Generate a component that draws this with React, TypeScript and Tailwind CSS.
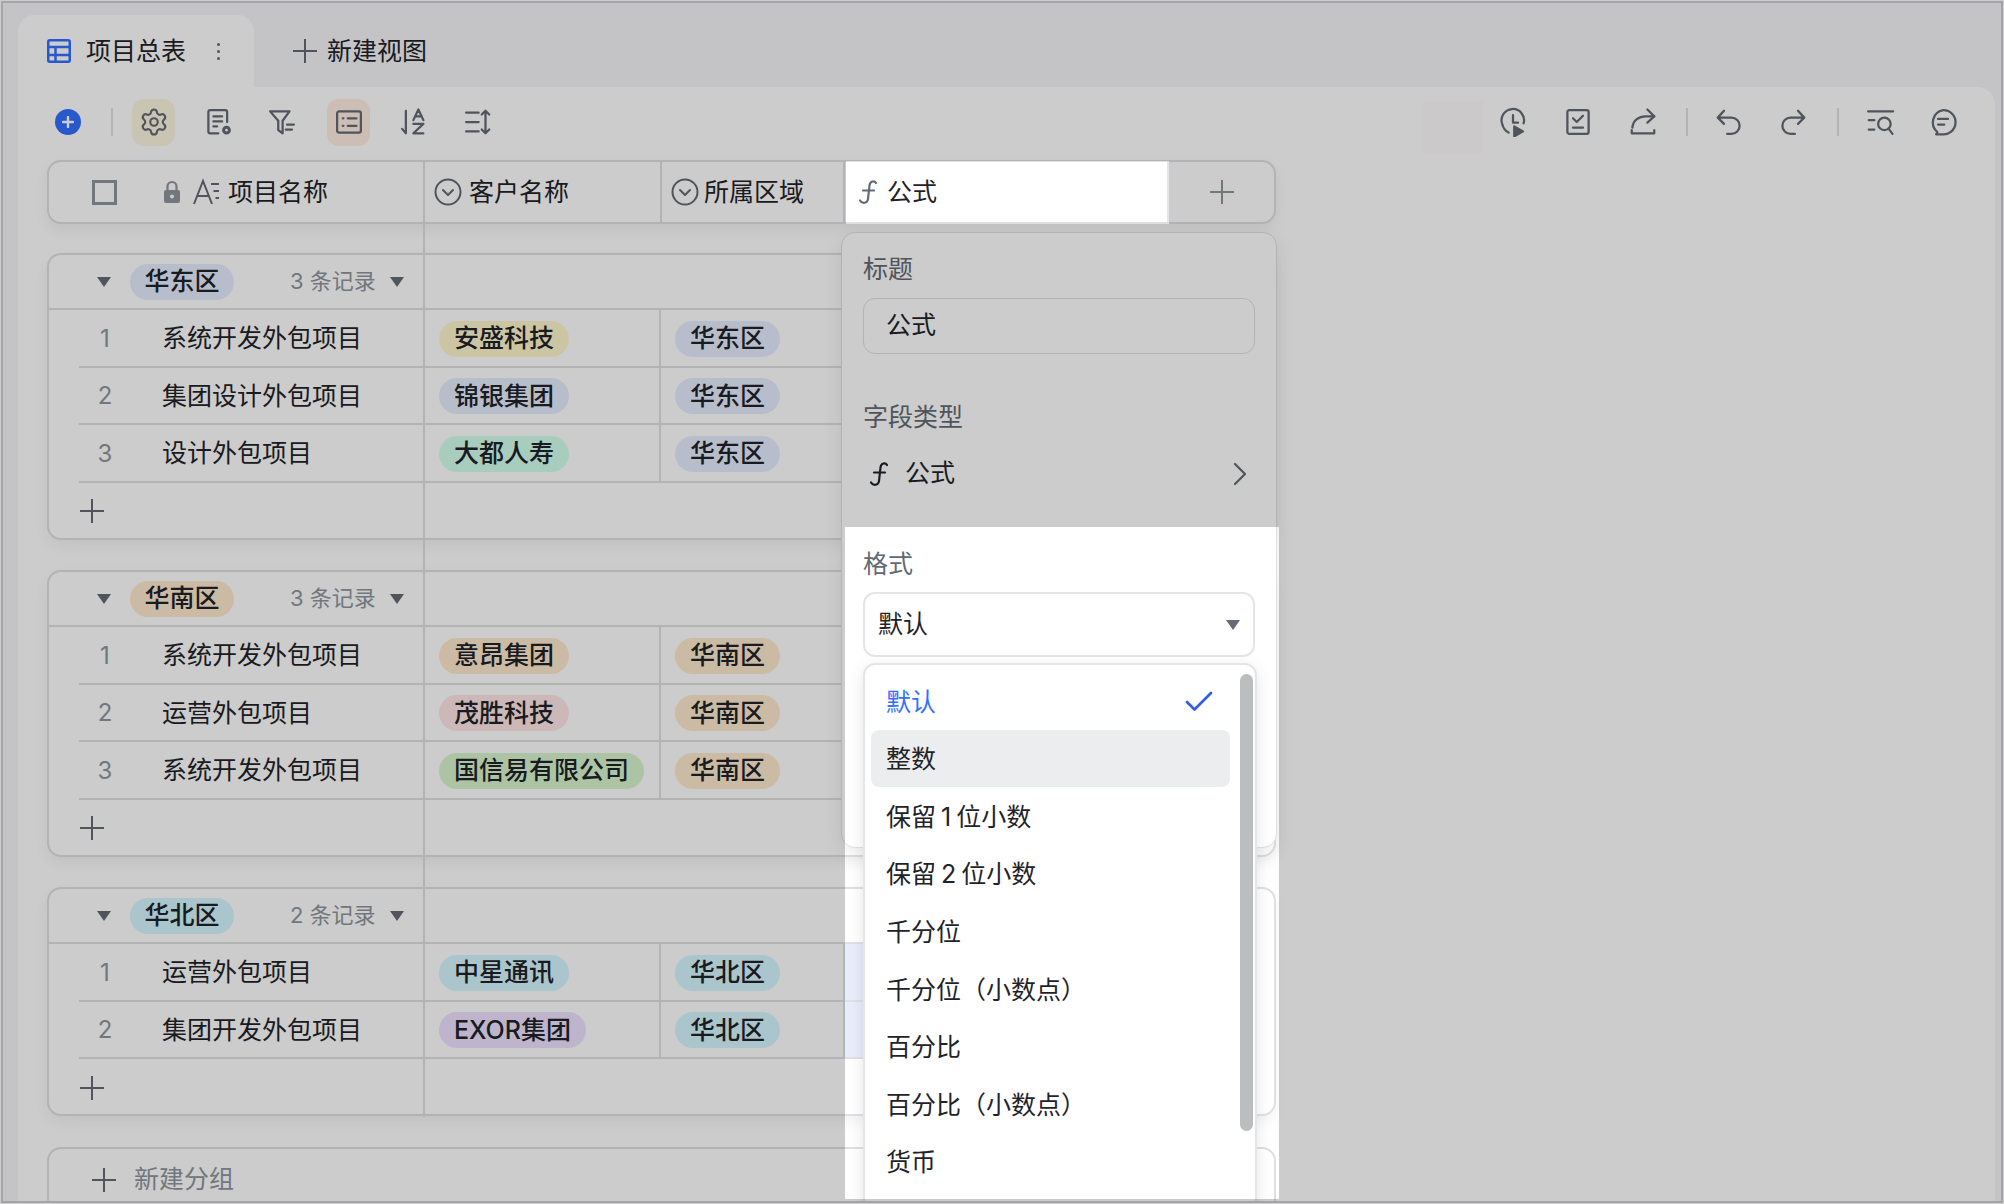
import { ChevronRight, Check, Settings } from 'lucide-react'

const font = 'font-["Inter","Noto_Sans_CJK_SC",sans-serif]'

interface Row {
  name: string
  customer: string
  customerColor: string
}

interface Group {
  region: string
  regionColor: string
  count: number
  rows: Row[]
}

const blue = 'bg-[#e6edff]'
const yellow = 'bg-[#fff7ce]'
const green = 'bg-[#d2ffed]'
const orange = 'bg-[#feeace]'
const pink = 'bg-[#ffe7e7]'
const leaf = 'bg-[#d7f5ce]'
const sky = 'bg-[#d5f7ff]'
const purple = 'bg-[#eee3ff]'

const groups: Group[] = [
  {
    region: '华东区',
    regionColor: blue,
    count: 3,
    rows: [
      { name: '系统开发外包项目', customer: '安盛科技', customerColor: yellow },
      { name: '集团设计外包项目', customer: '锦银集团', customerColor: blue },
      { name: '设计外包项目', customer: '大都人寿', customerColor: green },
    ],
  },
  {
    region: '华南区',
    regionColor: orange,
    count: 3,
    rows: [
      { name: '系统开发外包项目', customer: '意昂集团', customerColor: orange },
      { name: '运营外包项目', customer: '茂胜科技', customerColor: pink },
      { name: '系统开发外包项目', customer: '国信易有限公司', customerColor: leaf },
    ],
  },
  {
    region: '华北区',
    regionColor: sky,
    count: 2,
    rows: [
      { name: '运营外包项目', customer: '中星通讯', customerColor: sky },
      { name: '集团开发外包项目', customer: 'EXOR集团', customerColor: purple },
    ],
  },
]

const formats = ['整数', '保留 1 位小数', '保留 2 位小数', '千分位', '千分位（小数点）', '百分比', '百分比（小数点）', '货币']

function Icon({ children }: { children: React.ReactNode }) {
  return (
    <svg width="30" height="30" viewBox="0 0 24 24" fill="none" stroke="#646a73" strokeWidth="1.8" strokeLinecap="round" strokeLinejoin="round" className="-mx-px shrink-0">
      {children}
    </svg>
  )
}

function PlusIcon({ color = '#646a73' }: { color?: string }) {
  return (
    <svg width="24" height="24" viewBox="0 0 24 24" fill="none" stroke={color} strokeWidth="2" className="shrink-0">
      <path d="M12 0v24M0 12h24" />
    </svg>
  )
}

function FormulaIcon({ color = '#646a73' }: { color?: string }) {
  return (
    <svg width="24" height="28" viewBox="0 0 24 28" fill="none" stroke={color} strokeWidth="2.2" strokeLinecap="round" className="shrink-0">
      <path d="M21 5C19.500 2.500 15 2.800 14.500 7.500L13 21c-.5 4.500-6 5-8 1.500" />
      <path d="M8 12.500h11" />
    </svg>
  )
}

function CircleChevron() {
  return (
    <svg width="28" height="28" viewBox="0 0 28 28" fill="none" stroke="#646a73" strokeWidth="2" strokeLinecap="round" strokeLinejoin="round" className="shrink-0">
      <circle cx="14" cy="14" r="12.500" />
      <path d="M9 12l5 5 5-5" />
    </svg>
  )
}

function Triangle({ className = '' }: { className?: string }) {
  return <div className={`h-0 w-0 border-x-[7px] border-t-[10px] border-x-transparent border-t-[#646a73] ${className}`} />
}

function Pill({ color, children }: { color: string; children: React.ReactNode }) {
  return <span className={`inline-flex h-[36px] items-center rounded-full px-[15px] text-[25px] font-medium text-[#1f2329] ${color}`}>{children}</span>
}

function GroupBlock({ group }: { group: Group }) {
  return (
    <div className="w-[1229px] rounded-[14px] border-2 border-[#dee0e3] bg-white shadow-[0_6px_14px_rgba(0,0,0,0.05)]">
      <div className="flex h-[55px] w-[1122px] items-center border-b-2 border-[#dee0e3]">
        <div className="flex w-[374px] items-center">
          <Triangle className="ml-[48px]" />
          <div className={`ml-[19px] flex h-[36px] w-[104px] items-center justify-center rounded-full text-[25px] font-medium text-[#1f2329] ${group.regionColor}`}>{group.region}</div>
          <span className="ml-[56px] text-[22px] text-[#8f959e]">{group.count} 条记录</span>
          <Triangle className="ml-[14px]" />
        </div>
      </div>
      {group.rows.map((row, i) => (
        <div key={row.name + row.customer} className="ml-[30px] flex h-[57.5px] w-[1090px] items-center border-b-2 border-[#dee0e3]">
          <div className="flex h-full w-[344px] items-center pt-[2px]">
            <span className="w-[52px] text-center text-[24px] text-[#8f959e]">{i + 1}</span>
            <span className="ml-[31px] text-[25px] text-[#1f2329]">{row.name}</span>
          </div>
          <div className="flex h-full w-[238px] items-center border-r-2 border-[#dee0e3] pl-[16px] pt-[2px]">
            <Pill color={row.customerColor}>{row.customer}</Pill>
          </div>
          <div className="flex h-full w-[182px] items-center pl-[14px] pt-[2px]">
            <Pill color={group.regionColor}>{group.region}</Pill>
          </div>
          <div className="h-full flex-1 border-l-2 border-[#dee0e3] bg-[#e8edfb]" />
        </div>
      ))}
      <div className="flex h-[55px] items-center pl-[31px] pt-[2px]">
        <PlusIcon />
      </div>
    </div>
  )
}

export default function App() {
  return (
    <div className={`relative h-[1204px] w-[2004px] overflow-hidden bg-white p-px ${font}`}>
      <div className="relative h-[1202px] w-[2002px] overflow-hidden border-2 border-[#cecfd2] bg-[#f5f6f9]">
        {/* tabs */}
        <div className="flex h-[84px] items-end pl-[15px]">
          <div className="flex h-[72px] w-[236px] items-center rounded-t-[16px] bg-white pl-[29px]">
            <svg width="24" height="24" viewBox="0 0 24 24" fill="none" stroke="#3370ff" strokeWidth="2.500">
              <rect x="1.250" y="1.250" width="21.500" height="21.500" rx="1.500" />
              <path d="M1 8h22M1 16h22M8.500 8v15" />
            </svg>
            <span className="ml-[15px] pt-[1px] text-[25px] text-[#1f2329]">项目总表</span>
            <div className="ml-[31px] flex flex-col gap-[4px]">
              <div className="h-[3px] w-[3px] rounded-full bg-[#646a73]" />
              <div className="h-[3px] w-[3px] rounded-full bg-[#646a73]" />
              <div className="h-[3px] w-[3px] rounded-full bg-[#646a73]" />
            </div>
          </div>
          <div className="flex h-[72px] items-center pl-[39px]">
            <PlusIcon />
            <span className="ml-[10px] pt-[1px] text-[25px] text-[#1f2329]">新建视图</span>
          </div>
        </div>

        <div className="ml-[15px] h-[1120px] w-[1977px] rounded-tr-[18px] bg-white">
          {/* toolbar */}
          <div className="flex h-[70px] items-center pl-[37px]">
            <div className="flex h-[26px] w-[26px] items-center justify-center rounded-full bg-[#3370ff]">
              <svg width="12" height="12" viewBox="0 0 12 12" stroke="white" strokeWidth="2.400" strokeLinecap="round">
                <path d="M6 1v10M1 6h10" />
              </svg>
            </div>
            <div className="ml-[30px] h-[28px] w-[2px] bg-[#dee0e3]" />
            <div className="ml-[19px] flex h-[47px] w-[43px] items-center justify-center rounded-[12px] bg-[#fdf6df]">
              <Settings size={30} strokeWidth={1.7} color="#646a73" />
            </div>
            <div className="ml-[30px]">
              <Icon>
                <path d="M11.500 21H5a1.500 1.500 0 01-1.500-1.500V4A1.500 1.500 0 015 2.500h12A1.500 1.500 0 0118.500 4v8" />
                <path d="M7.500 7.500h7M7.500 11.500h7M7.500 15.500h3" />
                <circle cx="18" cy="18.500" r="2.300" strokeWidth="2.400" />
              </Icon>
            </div>
            <div className="ml-[35px]">
              <Icon>
                <path d="M2.500 3.500h15.500l-5.500 7.500v10l-3.500-2.500V11z" />
                <path d="M16 14h5.500M15 18h5" />
              </Icon>
            </div>
            <div className="ml-[31px] flex h-[47px] w-[43px] items-center justify-center rounded-[12px] bg-[#ffeee3]">
              <Icon>
                <rect x="2.500" y="3.500" width="19" height="17" rx="1.500" />
                <path d="M7 9h.5M11 9h7M7 15h.5M11 15h7" />
              </Icon>
            </div>
            <div className="ml-[30px]">
              <Icon>
                <path d="M5.500 3v18l-3-3.500" />
                <path d="M11.500 10.500L15.500 2l4 8.500M12.800 7.500h5.400M11.500 13.500h8l-8 7.500h8" />
              </Icon>
            </div>
            <div className="ml-[36px]">
              <Icon>
                <path d="M2.500 4.500h10M2.500 12h10M2.500 19.500h10" />
                <path d="M18 3v18M15 6l3-3 3 3M15 18l3 3 3-3" />
              </Icon>
            </div>

            <div className="ml-[931px] mt-[10px] h-[52px] w-[60px] bg-[#fffcfd]" />
            <div className="ml-[16px]">
              <Icon>
                <path d="M20.500 13A9 9 0 103.500 14c.6 2.500 2.300 5 5 6.500" />
                <path d="M12 6.500v6h4" />
                <path d="M13 15.500l7 4-7 4z" fill="#646a73" />
              </Icon>
            </div>
            <div className="ml-[37px]">
              <Icon>
                <rect x="3.500" y="2.500" width="17" height="19" rx="1.500" />
                <path d="M8 9l3 3 5-5M8 16.500h8" />
              </Icon>
            </div>
            <div className="ml-[37px]">
              <Icon>
                <path d="M3.500 16.500C4 10.500 9 7.500 14 7.500h7" />
                <path d="M15.500 2l5.500 5.500-5.500 5M3 18.500v2.500h18v-2.500" />
              </Icon>
            </div>
            <div className="ml-[29px] h-[28px] w-[2px] bg-[#dee0e3]" />
            <div className="ml-[27px]">
              <Icon>
                <path d="M8 3L3 8.500l5 5M3.500 8.500H14a6.500 6.500 0 010 13h-3.500" />
              </Icon>
            </div>
            <div className="ml-[36px]">
              <Icon>
                <path d="M16 3l5 5.500-5 5M20.500 8.500H10a6.500 6.500 0 000 13h3.500" />
              </Icon>
            </div>
            <div className="ml-[30px] h-[28px] w-[2px] bg-[#dee0e3]" />
            <div className="ml-[27px]">
              <Icon>
                <path d="M2.500 3.500h20M3 10.500h4.500M3 18h4.500" />
                <circle cx="15.500" cy="13.500" r="5" />
                <path d="M19 17.500l3 4" />
              </Icon>
            </div>
            <div className="ml-[35px]">
              <Icon>
                <path d="M12 2.500a9.700 9.700 0 11-1 19.300H6.500l1-1.800A10 10 0 0112 2.500z" />
                <path d="M8 9.500h8M8 14h5" />
              </Icon>
            </div>
          </div>

          {/* table */}
          <div className="relative ml-[29px] mt-[3px]">
            <div className="absolute left-[376px] top-0 h-[957px] w-[2px] bg-[#dee0e3]" />

            <div className="flex h-[64px] w-[1229px] items-stretch overflow-hidden rounded-[14px] border-2 border-[#dee0e3] bg-white shadow-[0_6px_14px_rgba(0,0,0,0.06)]">
              <div className="flex w-[374px] items-center">
                <div className="ml-[43px] h-[25px] w-[25px] border-[3px] border-[#8f959e]" />
                <svg width="18" height="24" viewBox="0 0 18 24" className="ml-[46px] shrink-0">
                  <path d="M4.500 11V6.500a4.500 4.500 0 019 0V11" fill="none" stroke="#8f959e" strokeWidth="2.200" />
                  <rect x="1" y="10" width="16" height="13" rx="2" fill="#8f959e" />
                  <circle cx="9" cy="16.500" r="2" fill="white" />
                </svg>
                <svg width="28" height="28" viewBox="0 0 28 28" fill="none" stroke="#646a73" strokeWidth="2" className="ml-[12px] shrink-0">
                  <path d="M1 26L10 3l9 23M4.500 18h11M18 6h8M20.500 13h5.500M22.500 20h3.500" />
                </svg>
                <span className="ml-[7px] pt-[2px] text-[25px] text-[#1f2329]">项目名称</span>
              </div>
              <div className="flex w-[237px] items-center border-l-2 border-[#dee0e3] pl-[9px]">
                <CircleChevron />
                <span className="ml-[7px] pt-[2px] text-[25px] text-[#1f2329]">客户名称</span>
              </div>
              <div className="flex w-[183px] items-center border-l-2 border-[#dee0e3] pl-[9px]">
                <CircleChevron />
                <span className="ml-[5px] pt-[2px] text-[25px] text-[#1f2329]">所属区域</span>
              </div>
              <div className="flex w-[326px] items-center border-x-2 border-l-[#dee0e3] border-r-[#e4e5e8] pl-[10px]">
                <FormulaIcon />
                <span className="ml-[8px] pt-[2px] text-[25px] text-[#1f2329]">公式</span>
              </div>
              <div className="flex flex-1 items-center justify-center">
                <PlusIcon color="#8f959e" />
              </div>
            </div>

            <div className="mt-[29px] flex flex-col gap-[30.5px]">
              {groups.map((g) => (
                <GroupBlock key={g.region} group={g} />
              ))}
              <div className="h-[80px] w-[1229px] rounded-t-[14px] border-2 border-[#dee0e3]">
                <div className="flex h-[62px] items-center pl-[43px]">
                  <PlusIcon />
                  <span className="ml-[18px] text-[25px] text-[#8f959e]">新建分组</span>
                </div>
              </div>
            </div>

            {/* field settings panel */}
            <div className="absolute left-[794px] top-[72px] h-[616px] w-[436px] rounded-[14px] border border-[#dee0e3] bg-white shadow-[0_6px_20px_rgba(0,0,0,0.08)]">
              <div className="px-[21px] pt-[18px]">
                <div className="text-[25px] leading-[36px] text-[#646a73]">标题</div>
                <div className="mt-[11px] flex h-[56px] w-[392px] items-center rounded-[12px] border border-[#dee0e3] pl-[22px] text-[25px] text-[#1f2329]">公式</div>
                <div className="mt-[45px] text-[25px] leading-[36px] text-[#646a73]">字段类型</div>
                <div className="mt-[21px] flex h-[36px] items-center pl-[3px]">
                  <FormulaIcon color="#1f2329" />
                  <span className="ml-[15px] text-[25px] text-[#1f2329]">公式</span>
                  <ChevronRight size={40} strokeWidth={1.3} color="#646a73" className="ml-auto -mr-[5px]" />
                </div>
                <div className="pt-[54px] text-[25px] leading-[36px] text-[#646a73]">格式</div>
                <div className="mt-[10px] flex h-[65px] w-[392px] items-center justify-between rounded-[12px] border-2 border-[#e4e5e8] pl-[13px] pr-[13px] text-[25px] text-[#1f2329]">
                  默认
                  <Triangle />
                </div>
              </div>

              {/* format dropdown */}
              <div className="absolute left-[21px] top-[430px] h-[560px] w-[394px] rounded-t-[12px] border-2 border-[#e4e5e8] bg-white px-[6px] pt-[7px] shadow-[0_4px_16px_rgba(0,0,0,0.1)]">
                <div className="flex h-[57.6px] items-center justify-between pl-[15px] pr-[32px] pt-[3px] text-[25px] text-[#3370ff]">
                  默认
                  <Check size={36} strokeWidth={1.8} color="#2f5fe8" />
                </div>
                {formats.map((f, i) => (
                  <div key={f} className={`flex h-[57.6px] w-[359px] items-center rounded-[8px] pl-[15px] pt-[3px] text-[25px] text-[#1f2329] [word-spacing:-2px] ${i === 0 ? 'bg-[#ecedee]' : ''}`}>
                    {f}
                  </div>
                ))}
                <div className="absolute right-[2px] top-[9px] h-[457px] w-[13px] rounded-full bg-[#bcbdbf]" />
              </div>
            </div>
          </div>
        </div>
      </div>

      {/* dim overlay with two cut-outs for the formula header and the panel */}
      <div className="pointer-events-none absolute inset-0 bg-black/20 [clip-path:polygon(evenodd,0_0,2004px_0,2004px_1204px,0_1204px,0_0,846px_161px,846px_224px,1169px_224px,1169px_161px,846px_161px,0_0,845px_527px,845px_1199px,1279px_1199px,1279px_527px,845px_527px,0_0)]" />
    </div>
  )
}
